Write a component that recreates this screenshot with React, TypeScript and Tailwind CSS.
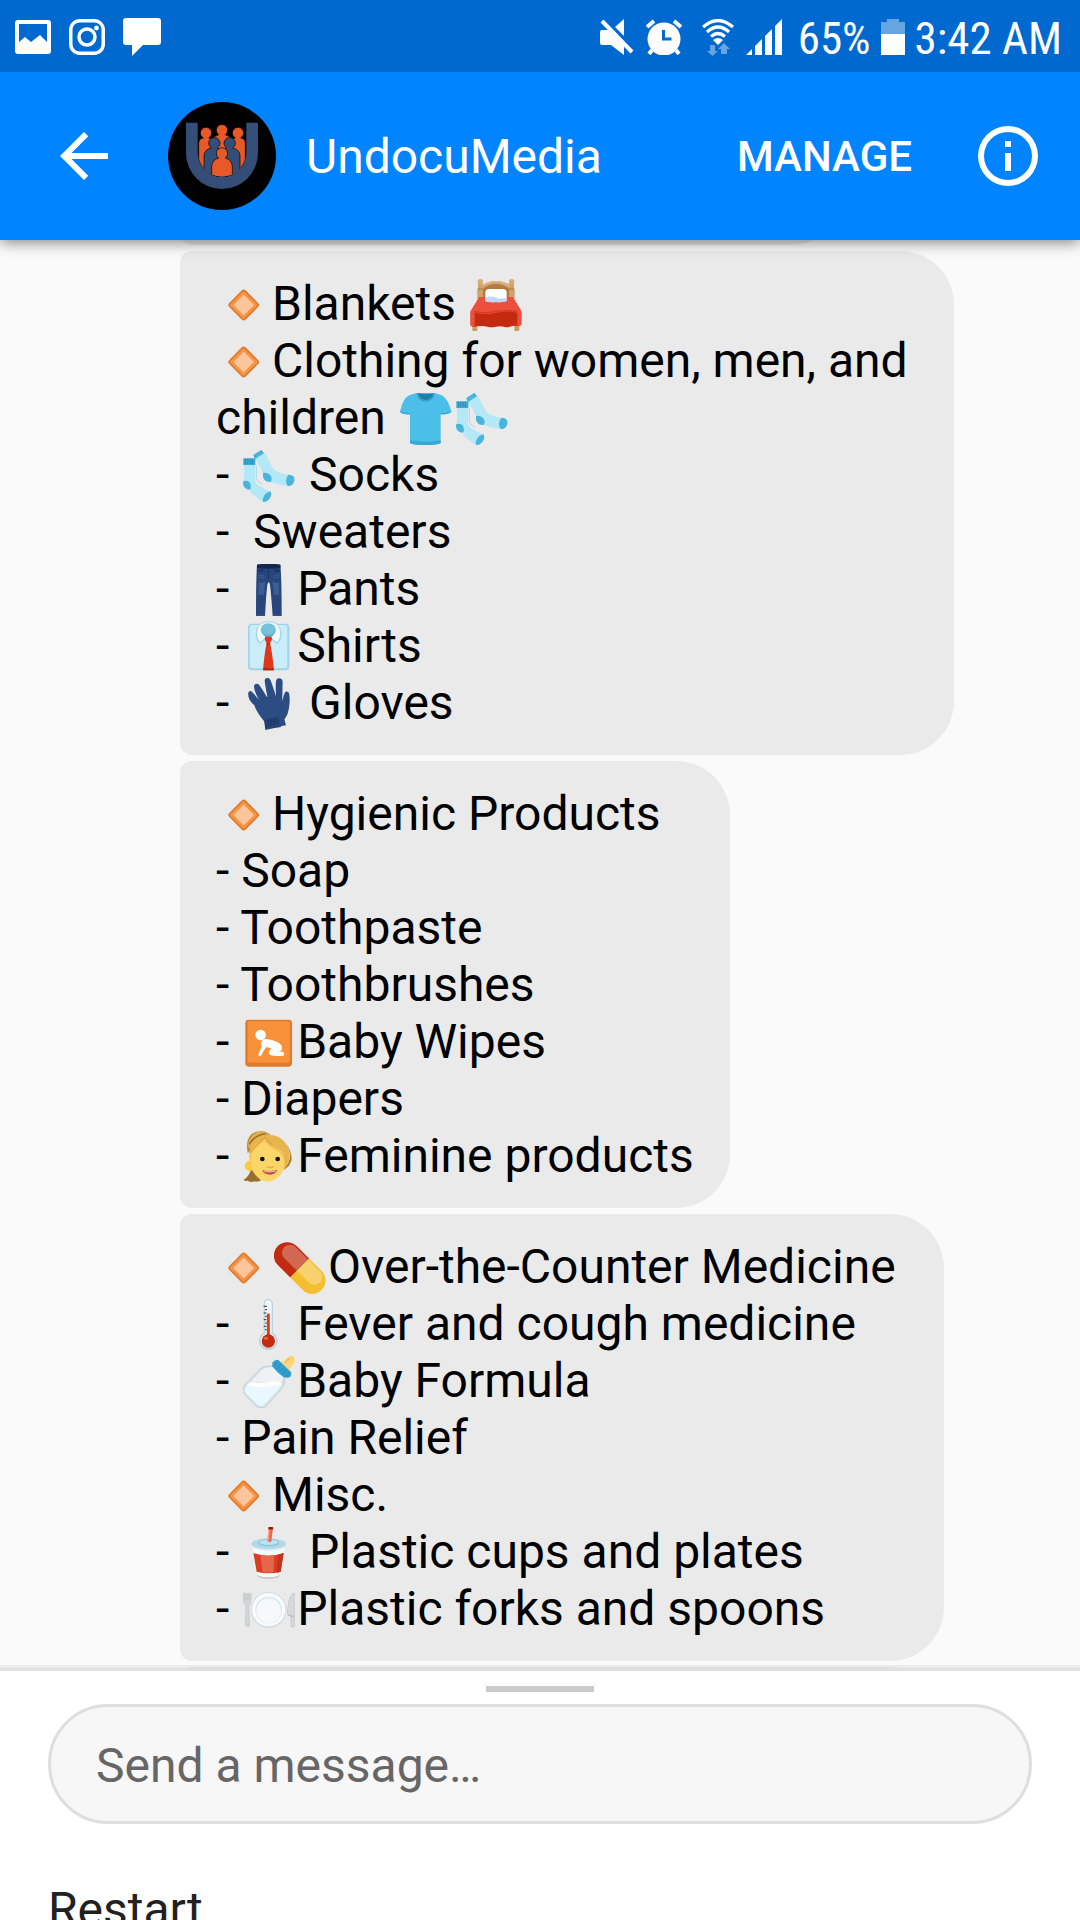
import type { ReactNode } from 'react'

// ---------- emoji ----------

function Emoji({ label, children }: { label: string; children: ReactNode }) {
  return (
    <svg
      role="img"
      aria-label={label}
      viewBox="0 0 156 156"
      className="mx-0.5 mt-1 inline-block h-[52px] w-[52px] align-top"
    >
      {children}
    </svg>
  )
}

const Diamond = () => (
  <Emoji label="orange diamond">
    <rect x="42" y="43" width="70" height="70" rx="9" fill="#e07a2d" transform="rotate(45 77 78)" />
    <rect x="47" y="48" width="60" height="60" rx="5" fill="#f79343" transform="rotate(45 77 78)" />
    <rect x="55" y="56" width="44" height="44" rx="2" fill="#fcc59c" transform="rotate(45 77 78)" />
  </Emoji>
)

const Bed = () => (
  <Emoji label="bed">
    <path d="M22 60V30Q46 6 78 6t56 24v30z" fill="#c99a62" />
    <path d="M38 62V30Q56 16 78 16t40 14v30z" fill="#b07b45" />
    <path d="M34 24Q54 9 78 9t44 15" fill="none" stroke="#dfb27d" strokeWidth="6" />
    <rect x="24" y="8" width="14" height="52" rx="3" fill="#d2a26b" />
    <rect x="118" y="8" width="14" height="52" rx="3" fill="#d2a26b" />
    <circle cx="31" cy="8" r="8" fill="#d9aa74" />
    <circle cx="125" cy="8" r="8" fill="#d9aa74" />
    <path d="M24 30h14M118 30h14" stroke="#a97442" strokeWidth="3" />
    <rect x="7" y="136" width="15" height="20" rx="3" fill="#c99a62" />
    <rect x="133" y="136" width="15" height="20" rx="3" fill="#c99a62" />
    <path d="M28 54h100l26 46v36q-3 6-12 5-12-2-22 2-10 3-18 0-12-3-24 0-14 4-26 0-14-4-30-1-14 3-20-2V100z" fill="#c32a0f" />
    <path d="M28 54h100q14 20 26 42v42q-6 4-12 2v-39q-32-7-62 0-36 7-66 0v40q-7 3-13-2V97z" fill="#ec4f3b" />
    <path d="M13 98q32 6 66 0 32-6 62 0" fill="none" stroke="#d63a25" strokeWidth="4" />
    <path d="M46 38q2-8 10-8h44q8 0 10 8v28q-16 5-32 3-18 2-32-3z" fill="#fff" />
    <path d="M46 56q16-7 32 0 16 5 32 0v10q-16 5-32 3-18 2-32-3z" fill="#c3d5fb" />
  </Emoji>
)

const TShirt = () => (
  <Emoji label="t-shirt">
    <path d="M50 0h54l20 6q10 4 18 18 8 14 12 32-10 8-32 8v86q-8 6-46 6t-46-6V64Q10 64 0 56q4-20 12-34Q20 8 32 5z" fill="#4bbfe7" />
    <path d="M30 142q46 8 92 0v8q-8 6-46 6t-46-6z" fill="#38a9d6" />
    <path d="M0 54q10 7 30 6v4Q10 66 0 58zM154 54q-10 7-32 6v4q22 2 32-6z" fill="#38a9d6" />
    <path d="M50 0q2 26 27 26T104 0l-8 2H60z" fill="#36a3cf" />
    <path d="M54 1q6 20 23 20T100 1q-23 6-46 0z" fill="#1f7ea8" />
  </Emoji>
)

const Socks = () => (
  <Emoji label="socks">
    <path d="M34 24L66 9q12 24 24 47 10 9 30 15 22 3 30 8 6 6 2 17-5 13-18 12-32-4-50-13-20-3-23-20-8-25-27-51z" fill="#b5e8f7" />
    <path d="M31 15L55 0l8 10-27 17z" fill="#3ba9d2" />
    <path d="M38 22l20-13M36 17l18-11" stroke="#6acdec" strokeWidth="2" />
    <path d="M60 69q12-3 21 6 8 8 3 20-12 3-20-6-6-8-4-20zM136 74q12 0 17 7 3 8-1 17-5 10-18 10-6-8-5-18 2-10 7-16z" fill="#49b5db" />
    <path d="M3 44h33v46q2 14 20 22 18 8 26 14 6 8-1 18-8 12-20 12-8-2-18-12-18-12-24-24Q2 118 0 104q4-10 3-18z" fill="#b5e8f7" />
    <path d="M1 25h36v20H1z" fill="#3ba9d2" />
    <path d="M7 26v16M14 26v16M21 26v16M28 26v16" stroke="#247fae" strokeWidth="2" />
    <path d="M1 93q10-3 18 3 6 6 4 20-4 4-10 2Q1 112 0 100zM82 124q6 8-1 20-8 12-20 12-4-7 2-18t19-14z" fill="#49b5db" />
    <path d="M40 46v40q4 12 18 17" fill="none" stroke="#7fd0ea" strokeWidth="2" />
  </Emoji>
)

const Jeans = () => (
  <Emoji label="jeans">
    <path d="M42 2q36-5 70 0 4 40 4 154H89q-4-60-8-94-4-14-8 0-4 34-7 94H39q0-110 3-154z" fill="#27467c" />
    <path d="M42 2q36-5 70 0v10q-35 5-70 0z" fill="#14264e" />
    <path d="M44 17q10 9 17-2M111 17q-10 9-17-2" stroke="#17305f" strokeWidth="4" fill="none" />
    <path d="M76 10v36" stroke="#17305f" strokeWidth="2" />
    <path d="M47 54q10 7 20-4l-4 42H46zM108 54q-10 7-20-4l5 42h15z" fill="#3e5d93" />
    <path d="M46 32l18 5M46 39l17 4M109 32l-18 5M109 39l-17 4" stroke="#48689e" strokeWidth="2" />
    <path d="M40 153h25M90 153h25" stroke="#35599a" strokeWidth="3" />
  </Emoji>
)

const TieShirt = () => (
  <Emoji label="shirt and tie">
    <rect x="15" y="8" width="124" height="140" rx="12" fill="#9fd3e5" />
    <rect x="20" y="12" width="113" height="130" rx="8" fill="#c9edf9" />
    <path d="M42 26q-6 26 9 41l22-20zM112 26q6 26-10 41L79 47z" fill="#eefafe" stroke="#a3d6e8" strokeWidth="4" />
    <path d="M42 30Q44 2 77 2t35 28q0 12-35 22-35-10-35-22z" fill="#eefafe" />
    <path d="M42 28Q46 2 77 2t35 26" fill="none" stroke="#a3d6e8" strokeWidth="3" />
    <ellipse cx="76" cy="26" rx="23" ry="19" fill="#79c1da" />
    <path d="M54 30q6 12 16 20h12q12-8 16-20-10 12-22 12T54 30z" fill="#5eacc8" />
    <path d="M65 52q0-5 5-5h12q6 0 5 6-1 9-6 12 7 30 12 83H60q4-50 11-83-5-4-6-13z" fill="#dc391c" />
    <path d="M71 65q6 3 10 0l1 5H70zM62 140l-1 8h31l-1-8-5 4z" fill="#b22309" />
  </Emoji>
)

const Glove = () => (
  <Emoji label="glove">
    <path d="M65 152q1-14-13-31Q36 98 32 82 14 66 15 47q0-9 7-8 4 1 22 26Q30 36 31 24q2-9 11-6 4 2 26 42Q60 16 60 6q2-7 9-6 6 2 8 9l14 46q-2-42 1-50 3-6 10-4 6 2 7 9l-1 60q4-20 7-26 4-6 9-2 5 3 4 32-2 34-14 50l4 18z" transform="translate(-1 0) scale(1.1 1)" fill="#2c4d84" />
    <path d="M63 124l46-10 5 33q-22 3-47 9z" fill="#27457a" />
    <path d="M67 127l3 22M75 125l4 22M83 123l4 21M91 121l4 21M99 119l4 20" stroke="#142b56" strokeWidth="2.5" />
    <path d="M56 66q12-10 34-6M103 97q8-12 18-14" fill="none" stroke="#213c6c" strokeWidth="2" />
  </Emoji>
)

const BabySign = () => (
  <Emoji label="baby symbol">
    <rect x="7" y="8" width="140" height="141" rx="10" fill="#df792c" />
    <rect x="14" y="13" width="127" height="124" rx="6" fill="#f89139" />
    <circle cx="53" cy="54" r="16" fill="#fff" />
    <path d="M54 77q5-13 18-11 18 2 32 10 16 9 13 20-2 6-14 9 14-4 20 2 2 9-3 9-22 3-36-1-10-4-6-12 2-6 8-8-8-3-16-5-8 10-14 23-3 7-9 3-3-2 1-9 6-13 8-21z" fill="#fff" />
  </Emoji>
)

const Woman = () => (
  <Emoji label="woman with blond hair">
    <path d="M14 66Q4 14 40 2q30-6 44 12l-40 30z" fill="#b98a3a" />
    <path d="M14 42q6-30 30-39 24-4 34 8Q44 14 22 56z" fill="#e6ae4a" />
    <path d="M18 40q18-28 50-32" fill="none" stroke="#8f6a2c" strokeWidth="4" />
    <path d="M26 108q-6 28-24 38 4 6 12 3 10 7 20 2 12 3 20-3z" fill="#97702e" />
    <path d="M20 60Q28 14 80 11q38 2 54 36 10 32 2 50-4 14-14 20L60 98 20 96z" fill="#e9b44e" />
    <path d="M122 117q20-22 19-44-3-22-12-34 14 16 17 42 0 22-24 36z" fill="#a67c33" />
    <circle cx="20" cy="105" r="15" fill="#ffc93c" />
    <path d="M22 76q3-28 42-48 18 24 44 34 17 10 17 34-3 34-26 48-22 14-46 2-22-14-30-40z" fill="#fad568" />
    <path d="M18 76q10-32 48-56 12 24 42 34 21 12 20 28-3-14-20-21Q76 48 64 30 42 44 34 55 24 68 22 92z" fill="#f3c35d" />
    <path d="M20 66Q38 48 66 18q6 16 22 24" fill="none" stroke="#cf9b40" strokeWidth="3" />
    <circle cx="58" cy="84" r="7" fill="#111" />
    <circle cx="104" cy="84" r="7" fill="#111" />
    <path d="M69 104q13 6 25 0-3 9-12 8-10 0-13-8z" fill="#f0a638" />
    <path d="M57 118q24 5 46-1-6 14-22 14-17 0-24-13z" fill="#b14c51" />
    <path d="M62 121q20 3 36-1" stroke="#f4a58e" strokeWidth="4" fill="none" />
  </Emoji>
)

const Pill = () => (
  <Emoji label="pill">
    <g transform="rotate(45 77 78)">
      <path d="M77 38H24a40 40 0 0 0 0 80h53z" fill="#c32b10" />
      <path d="M77 38h53a40 40 0 0 1 0 80H77z" fill="#f3be30" />
      <path d="M77 42H24a24 24 0 0 0 0 48h53z" fill="#d26851" />
      <path d="M77 42h50a24 24 0 0 1 0 48H77z" fill="#f7d16b" />
    </g>
  </Emoji>
)

const Thermometer = () => (
  <Emoji label="thermometer">
    <path d="M62 14a14 14 0 0 1 28 0v87a28 28 0 1 1-28 0z" fill="#bfd2dc" />
    <path d="M66 14a10 10 0 0 1 20 0v90a23 23 0 1 1-20 0z" fill="#eef5f9" />
    <path d="M76 44v74" stroke="#d9401f" strokeWidth="9" />
    <circle cx="76" cy="126" r="20" fill="#c32a0e" />
    <ellipse cx="69" cy="118" rx="7" ry="5" fill="#ea6046" />
    <path d="M62 22h10M66 32h6M62 42h8M66 52h5M62 62h8M66 72h5M62 82h8M66 92h5" stroke="#26323a" strokeWidth="3" />
  </Emoji>
)

const BabyBottle = () => (
  <Emoji label="baby bottle">
    <path d="M88 30q-24-2-36 8L8 84q-14 16-4 30l36 36q14 12 30 0l46-52q12-12 8-40z" fill="#d5e2e9" stroke="#bdd0da" strokeWidth="3" />
    <path d="M88 34q-20-2-32 8L26 75l88 10 2-8q5-10 4-18z" fill="#eff2f5" />
    <path d="M12 87q8-9 20-7 26 7 50-2 22-4 35 5-4 10-10 17l-44 46q-10 9-21-1L9 112q-8-10 3-25z" fill="#e8f8fe" />
    <path d="M12 87q12-13 24-9 22 6 48-2 22-2 32 7-16 8-36 8-40 6-68-4z" fill="#fff" />
    <path d="M104 20l13-3q10-2 13-9 8-10 18-7 9 4 8 14-2 9-9 14-6 4-6 12l4 14-10 8z" fill="#ffd57c" />
    <path d="M126 20q8-12 16-13" stroke="#f1b955" strokeWidth="4" fill="none" />
    <path d="M88 20q6-10 17-9 14 12 39 38 3 8-3 15-12 3-20-1Q102 51 88 31z" fill="#2f9fd0" />
    <path d="M94 31l11-17M102 39l12-15M111 47l12-14M119 55l12-14M128 61l10-12" stroke="#2282b3" strokeWidth="2" />
  </Emoji>
)

const Cup = () => (
  <Emoji label="cup with straw">
    <ellipse cx="76" cy="145" rx="34" ry="10" fill="#b9bcbd" />
    <path d="M28 58h98l-14 82q-6 11-36 11t-36-11z" fill="#f7f7f7" />
    <path d="M31 78q45 16 91 0l-9 56q-37 10-72 0z" fill="#dc3d20" />
    <path d="M52 84q20 4 42 1l-3 51q-16 2-32 0z" fill="#e4674d" />
    <path d="M105 83q8-1 17-5l-9 56q-6 3-12 3z" fill="#bc3520" />
    <ellipse cx="77" cy="54" rx="52" ry="17" fill="#d2edf6" />
    <ellipse cx="77" cy="50" rx="52" ry="16" fill="#b4d8e5" />
    <ellipse cx="77" cy="47" rx="32" ry="11" fill="#8cc3d8" />
    <ellipse cx="77" cy="46" rx="28" ry="8" fill="#b9e4f2" />
    <path d="M77 2q6-3 13 0l-5 42q-6 2-12-1z" fill="#f0674d" />
    <path d="M78 5l-3 38" stroke="#ffa48f" strokeWidth="4" />
    <path d="M76 1q8-3 15 0l-1 6q-8 2-14-1z" fill="#8e1b08" />
  </Emoji>
)

const Plate = () => (
  <Emoji label="fork, knife and plate">
    <circle cx="77" cy="78" r="54" fill="#d3dee4" />
    <circle cx="77" cy="77" r="50" fill="#f8fbfd" />
    <circle cx="77" cy="78" r="40" fill="#dce5ea" />
    <circle cx="77" cy="80" r="37" fill="#f6f9fb" />
    <path d="M1 28q0-3 3 0v18h3V28q4-2 4 0v18h3V28q4-2 4 0v18h3V28q3-2 3 0 1 22-2 30-2 6-5 7l3 60q-4 5-13 0l2-60Q2 62 1 48z" fill="#d3d6d8" stroke="#b7bbbd" strokeWidth="1.5" />
    <path d="M154 27q-8 0-14 16-8 30-7 48 4 6 11 5v32q5 4 10 0z" fill="#d6d9db" stroke="#b7bbbd" strokeWidth="1.5" />
    <path d="M136 92q6 6 17 4" stroke="#9fa4a7" strokeWidth="2" fill="none" />
  </Emoji>
)

// ---------- status bar ----------

const PhotoIcon = () => (
  <svg viewBox="0 0 36 36" className="h-9 w-9" fill="#fff" aria-hidden="true">
    <path fillRule="evenodd" d="M3 1h30a3 3 0 0 1 3 3v28a3 3 0 0 1-3 3H3a3 3 0 0 1-3-3V4a3 3 0 0 1 3-3zm1 4v18l6-5 6 5 9-7 7 7V5z" />
  </svg>
)

const InstagramIcon = () => (
  <svg viewBox="0 0 36 36" className="h-9 w-9" fill="none" stroke="#fff" strokeWidth="3.5" aria-hidden="true">
    <rect x="1.75" y="1.75" width="32.5" height="32.5" rx="9" />
    <circle cx="18" cy="18" r="8" />
    <circle cx="27.5" cy="9" r="2.4" fill="#fff" stroke="none" />
  </svg>
)

const ChatIcon = () => (
  <svg viewBox="0 0 38 38" className="h-[38px] w-[38px]" fill="#fff" aria-hidden="true">
    <path d="M3 0h32a3 3 0 0 1 3 3v21a3 3 0 0 1-3 3H20L9 38V27H3a3 3 0 0 1-3-3V3a3 3 0 0 1 3-3z" />
  </svg>
)

const MuteIcon = () => (
  <svg viewBox="0 0 34 36" className="h-9 w-[34px]" fill="#fff" aria-hidden="true">
    <path d="M15 8l9-8v17zM0 13q0-2 2-2h6l16 16v9L11 26H2q-2 0-2-2z" />
    <path d="M5 0l28 30" stroke="#0069cf" strokeWidth="3" />
    <path d="M2 2l30 31" stroke="#fff" strokeWidth="4" />
  </svg>
)

const AlarmIcon = () => (
  <svg viewBox="0 0 36 36" className="h-9 w-9" fill="#fff" aria-hidden="true">
    <circle cx="18" cy="20" r="16.5" />
    <path d="M1 8l7-6M35 8l-7-6M6 31l-3 4M30 31l3 4" stroke="#fff" strokeWidth="4" />
    <path d="M17.500 11v9h8" stroke="#0069cf" strokeWidth="3" fill="none" />
  </svg>
)

const WifiIcon = () => (
  <svg viewBox="0 0 32 37" className="h-[37px] w-8" aria-hidden="true">
    <g fill="none" stroke="#fff" strokeWidth="3.2">
      <path d="M1 8q15-13 30 0" />
      <path d="M5 13q11-10 22 0" />
      <path d="M9 17.500q7-6 14 0" />
    </g>
    <path d="M11 21q5-4 10 0l-5 5z" fill="#fff" />
    <path d="M8 26h5v6h3l-5.500 5L5 32h3zM19 35v-5h-3l6-6 6 6h-3v5z" fill="#66a5e2" />
  </svg>
)

const SignalIcon = () => (
  <svg viewBox="0 0 36 36" className="h-9 w-9" fill="#fff" aria-hidden="true">
    <path d="M0 36l6-6v6zM9 27l7-7v16H9zM19 17l7-7v26h-7zM29 7l7-7v36h-7z" />
  </svg>
)

const BatteryIcon = () => (
  <svg viewBox="0 0 24 36" className="h-9 w-6" aria-hidden="true">
    <path d="M6 0h12v3h6v12H0V3h6z" fill="#66a5e2" />
    <path d="M0 15h24v21H0z" fill="#fff" />
  </svg>
)

function StatusBar() {
  return (
    <div className="relative z-20 flex h-[72px] shrink-0 items-center justify-between bg-[#0069cf] pt-0.5 pr-[18px] pl-[15px] text-white">
      <div className="flex items-center gap-[18px]">
        <PhotoIcon />
        <InstagramIcon />
        <ChatIcon />
      </div>
      <div className="flex items-center font-['Roboto_Condensed',Roboto,sans-serif] text-[45px] leading-[57px]">
        <div className="flex items-center gap-3">
          <MuteIcon />
          <AlarmIcon />
          <span className="pl-2">
            <WifiIcon />
          </span>
          <SignalIcon />
        </div>
        <span className="pt-0.5 pl-4">65%</span>
        <span className="px-2.5">
          <BatteryIcon />
        </span>
        <span className="pt-0.5">3:42 AM</span>
      </div>
    </div>
  )
}

// ---------- header ----------

function Avatar() {
  return (
    <svg viewBox="0 0 324 324" className="ml-12 h-[108px] w-[108px]" role="img" aria-label="UndocuMedia logo">
      <clipPath id="cup">
        <path d="M90 0V152a72 72 0 0 0 144 0V0z" />
      </clipPath>
      <circle cx="162" cy="162" r="162" />
      <path d="M54 62v91a108 108 0 0 0 216 0V62h-35v90a73 73 0 0 1-146 0V62z" fill="#344e78" />
      <g clipPath="url(#cup)" stroke="#000" strokeWidth="2">
        <g fill="#e8592a">
          <path d="M92 240V124q0-14 14-16a17 17 0 1 1 16 0q18 2 18 16v116z" />
          <path d="M184 240V124q0-14 18-16a17 17 0 1 1 16 0q14 2 14 16v116z" />
          <path d="M130 240V114q4-10 22-16a17 17 0 1 1 20 0q18 6 22 16v126z" />
        </g>
        <g fill="#344e78">
          <path d="M108 240v-80q2-18 22-22a17 17 0 1 1 18 0q16 4 18 20v82z" />
          <path d="M158 240v-82q2-16 18-20a17 17 0 1 1 18 0q20 4 22 22v80z" />
        </g>
        <path d="M131 223v-30q2-20 21-25a17 17 0 1 1 20 0q19 5 21 25v30q-31 6-62 0z" fill="#e8592a" />
      </g>
    </svg>
  )
}

function Header() {
  return (
    <header className="relative z-10 flex h-[168px] shrink-0 items-center bg-[#0084ff] pr-9 pl-12 text-white shadow-[0_2px_14px_rgba(0,0,0,0.5)]">
      <button aria-label="Back">
        <svg viewBox="0 0 24 24" className="h-[72px] w-[72px]" fill="#fff">
          <path d="M20 11H7.830l5.590-5.590L12 4l-8 8 8 8 1.410-1.410L7.830 13H20z" />
        </svg>
      </button>
      <Avatar />
      <h1 className="ml-[30px] flex-1 text-[48px] leading-[57px]">UndocuMedia</h1>
      <button className="mr-[60px] text-[42px] leading-[57px] font-medium">MANAGE</button>
      <button aria-label="Info">
        <svg viewBox="0 0 24 24" className="h-[72px] w-[72px]" fill="#fff">
          <path d="M11 17h2v-6h-2zm1-15a10 10 0 1 0 0 20 10 10 0 0 0 0-20zm0 18a8 8 0 1 1 0-16 8 8 0 0 1 0 16zM11 9h2V7h-2z" />
        </svg>
      </button>
    </header>
  )
}

// ---------- messages ----------

const messages: ReactNode[][] = [
  [
    <><Diamond />Blankets <Bed /></>,
    <><Diamond />Clothing for women, men, and children <TShirt /><Socks /></>,
    <>- <Socks /> Socks</>,
    <>-  Sweaters</>,
    <>- <Jeans />Pants</>,
    <>- <TieShirt />Shirts</>,
    <>- <Glove /> Gloves</>,
  ],
  [
    <><Diamond />Hygienic Products</>,
    <>- Soap</>,
    <>- Toothpaste</>,
    <>- Toothbrushes</>,
    <>- <BabySign />Baby Wipes</>,
    <>- Diapers</>,
    <>- <Woman />Feminine products</>,
  ],
  [
    <><Diamond /><Pill />Over-the-Counter Medicine{'\u00a0'}</>,
    <>- <Thermometer />Fever and cough medicine</>,
    <>- <BabyBottle />Baby Formula</>,
    <>- Pain Relief</>,
    <><Diamond />Misc.</>,
    <>- <Cup /> Plastic cups and plates</>,
    <>- <Plate />Plastic forks and spoons</>,
  ],
]

function Bubble({ lines }: { lines: ReactNode[] }) {
  return (
    <div className="rounded-l-xl rounded-r-[54px] bg-[#eaeaea] px-9 py-6 text-[48px] leading-[57px] whitespace-pre-wrap text-black">
      {lines.map((line, i) => (
        <p key={i}>{line}</p>
      ))}
    </div>
  )
}

export default function App() {
  return (
    <div className="flex h-screen flex-col overflow-hidden bg-[#fafafa] font-[Roboto,sans-serif]">
      <StatusBar />
      <Header />

      <main className="flex min-h-0 flex-1 flex-col items-start gap-1.5 overflow-hidden pr-[126px] pl-[180px]">
        {/* bottom edge of the message scrolled under the header */}
        <div className="flex h-[5px] shrink-0 items-end overflow-hidden">
          <div className="h-28 w-[665px] shrink-0 rounded-l-xl rounded-r-[54px] bg-[#eaeaea]" />
        </div>
        {messages.map((lines, i) => (
          <Bubble key={i} lines={lines} />
        ))}
        <div className="h-28 w-[761px] shrink-0 rounded-l-xl rounded-r-[54px] bg-[#eaeaea]" />
      </main>

      <footer className="relative h-[252px] shrink-0 border-t-3 border-[#e0e0e0] bg-white px-12 pt-[15px] shadow-[0_-3px_0_rgba(0,0,0,0.06)]">
        <div className="mx-auto mb-3 h-1.5 w-[108px] bg-[#cacaca]" />
        <input
          type="text"
          aria-label="Send a message"
          placeholder="Send a message…"
          className="block h-[120px] w-full rounded-full border-3 border-[#dedede] bg-[#f7f7f7] px-[45px] pt-0.5 text-[48px] text-black placeholder:text-[#666666]"
        />
        <button className="mt-[57px] block text-[48px] leading-[57px] text-[#212121]">Restart</button>
      </footer>
    </div>
  )
}
